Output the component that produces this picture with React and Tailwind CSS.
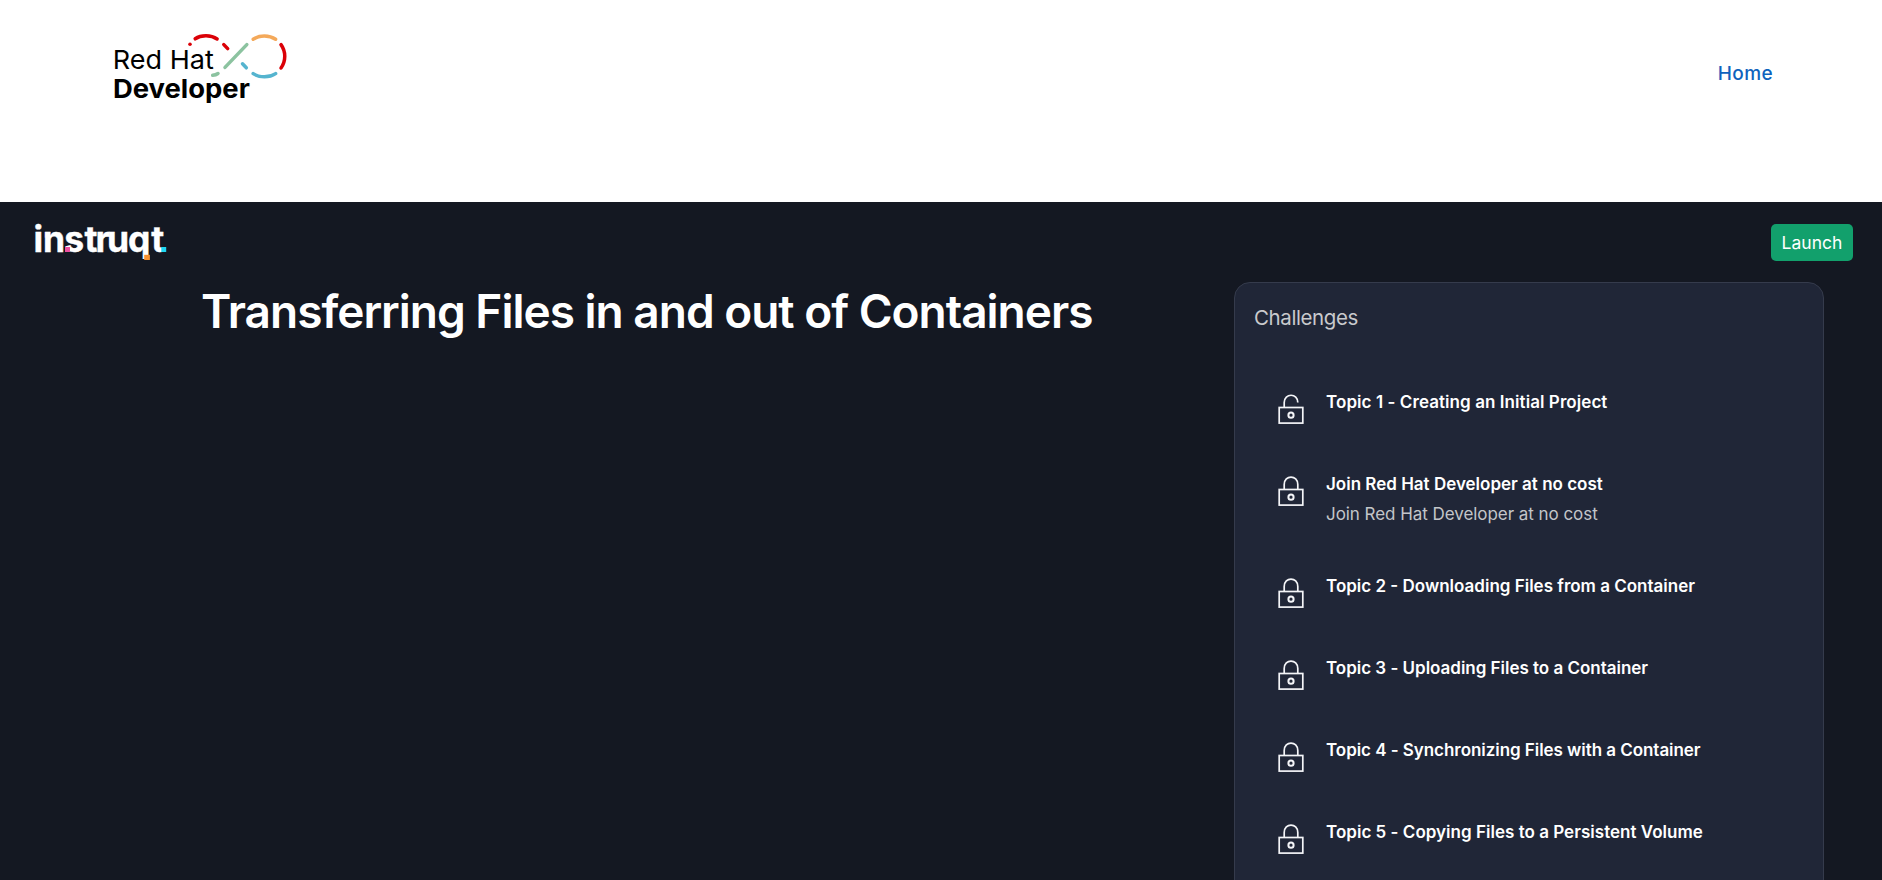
const challenges = [
  { title: "Topic 1 - Creating an Initial Project", tracking: "tracking-[0.07px]", open: true },
  { title: "Join Red Hat Developer at no cost", tracking: "tracking-[0px]", sub: "Join Red Hat Developer at no cost" },
  { title: "Topic 2 - Downloading Files from a Container", tracking: "tracking-[0px]" },
  { title: "Topic 3 - Uploading Files to a Container", tracking: "tracking-[-0.02px]" },
  { title: "Topic 4 - Synchronizing Files with a Container", tracking: "tracking-[-0.05px]" },
  { title: "Topic 5 - Copying Files to a Persistent Volume", tracking: "tracking-[0.02px]" },
];

function RedHatDeveloperLogo() {
  return (
    <svg className="block h-[80px] w-[180px]" viewBox="110 30 180 80" fill="none" role="img">
      <g strokeWidth="3.5" strokeLinecap="round">
        <path d="M195.2 38.8C201 34.8 211 34.8 217.1 39" stroke="#db0007" />
        <path d="M223.8 44.6L227.7 48.6" stroke="#db0007" />
        <path d="M246.8 44.6L225 67.4" stroke="#8cc3a0" />
        <path d="M212.7 75.3Q215.8 75 218 73.5" stroke="#8cc3a0" />
        <path d="M242.5 63.8L246.3 67.8" stroke="#55b4cf" />
        <path d="M253.2 39.2C259.5 34.9 269.3 34.9 275.6 39.2" stroke="#f4a95a" />
        <path d="M281 44.6C286 51.5 286 61 281 68" stroke="#db0007" />
        <path d="M253.2 73.6C259.5 77.9 269.3 77.9 275.6 73.6" stroke="#55b4cf" />
      </g>
      <circle cx="190" cy="44.3" r="1.8" fill="#db0007" />
      <g fill="#000" fontFamily="Inter, sans-serif">
        <text x="112.8" y="69.2" fontSize="26" fontWeight="400" textLength="101" lengthAdjust="spacingAndGlyphs">Red Hat</text>
        <text x="112.9" y="98.4" fontSize="26" fontWeight="700" textLength="137" lengthAdjust="spacingAndGlyphs">Developer</text>
      </g>
    </svg>
  );
}

function InstruqtLogo() {
  return (
    <svg className="block h-[44px] w-[136px] overflow-visible" viewBox="32 222 136 44" role="img">
      <rect x="44.7" y="232" width="5.6" height="5.6" fill="#9a6be0" />
      <rect x="121.6" y="246.4" width="5.4" height="5.6" fill="#9a6be0" />
      <text
        x="33.6 42.9 64.2 84.6 95.6 107 128 151.2"
        y="251.8"
        fontSize="35.5"
        fontWeight="700"
        fontFamily="Inter, sans-serif"
        fill="#fff"
        stroke="#fff"
        strokeWidth="0.4"
      >
        instruqt
      </text>
      <rect x="65" y="247" width="5" height="5" fill="#ee4fa0" />
      <rect x="144.2" y="254.8" width="5.7" height="5.2" fill="#f6922f" />
      <rect x="161.3" y="247" width="4.9" height="5" fill="#1fd6f2" />
    </svg>
  );
}

function LockIcon({ open }) {
  return (
    <svg className="block h-[31px] w-[26px] shrink-0" viewBox="0 0 26 31" fill="none" stroke="#f4f5f8" strokeWidth="1.7">
      <rect x="1.2" y="13.5" width="23.6" height="15.6" />
      <path d={open ? "M6.2 13.5V8.6C6.2 -1.2 20 -1.2 19.8 8.6" : "M6.2 13.5V8.6C6.2 -1.5 19.8 -1.5 19.8 8.6V13.5"} />
      <circle cx="13" cy="21.2" r="2.6" strokeWidth="2" />
    </svg>
  );
}

export default function App() {
  return (
    <div className="flex h-[880px] w-full flex-col overflow-hidden bg-white font-['Inter',sans-serif]">
      <header className="flex h-[202px] shrink-0 items-start justify-between pt-[30px] pr-[109px] pl-[110px]">
        <RedHatDeveloperLogo />
        <a className="pt-[32px] text-[19px] leading-6 font-medium tracking-[0.4px] text-[#0f62bd]">Home</a>
      </header>

      <div className="flex grow flex-col bg-[#141822]">
        <div className="flex h-[80px] shrink-0 items-start justify-between pt-[20px] pr-[29px] pl-[32px]">
          <InstruqtLogo />
          <button className="mt-[2px] h-[37px] w-[82px] rounded-[5px] bg-[#12a06c] text-[17.5px] leading-[37px] text-white">
            Launch
          </button>
        </div>

        <main className="flex grow justify-between pr-[58px] pl-[201px]">
          <h1 className="pt-px text-[46px] leading-[56px] font-semibold tracking-[-1px] whitespace-nowrap text-white">
            Transferring Files in and out of Containers
          </h1>
          <section className="h-[700px] w-[590px] rounded-2xl border border-[#353b4c] bg-[#202637]">
            <h2 className="h-[83px] pt-[20px] pl-[19px] text-[20.5px] leading-[30px] tracking-[-0.4px] text-[#c9cacd]">
              Challenges
            </h2>
            <ul className="pr-6 pl-[43px]">
              {challenges.map((c) => (
                <li key={c.title} className="flex min-h-[82px] items-start gap-[22px] py-[21px]">
                  <div className="pt-[7px]">
                    <LockIcon open={c.open} />
                  </div>
                  <div>
                    <p className={`text-[17px] leading-[30px] font-semibold text-white ${c.tracking}`}>{c.title}</p>
                    {c.sub && (
                      <p className="text-[17px] leading-[30px] tracking-[-0.05px] text-[#c3c5c9]">{c.sub}</p>
                    )}
                  </div>
                </li>
              ))}
            </ul>
          </section>
        </main>
      </div>
    </div>
  );
}
